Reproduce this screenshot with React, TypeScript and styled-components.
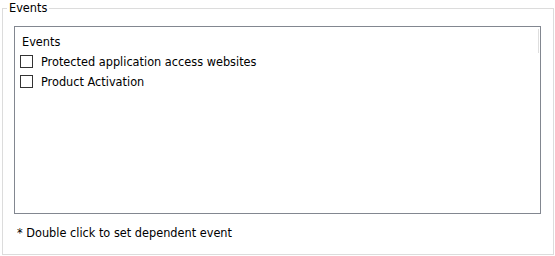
import React from 'react'
import styled, { createGlobalStyle } from 'styled-components'

const Global = createGlobalStyle`
  html, body { margin: 0; padding: 0; background: #fff; }
  body {
    font-family: "DejaVu Sans Condensed", "DejaVu Sans", sans-serif;
    font-size: 12.6px;
    color: #000;
  }
`

const Group = styled.fieldset`
  box-sizing: border-box;
  width: 552px;
  height: 255px;
  margin: 0 0 0 2px;
  padding: 10px 12px 0 11px;
  border: 1px solid #dcdcdc;
  border-radius: 0;
  min-width: 0;
`

const Legend = styled.legend`
  padding: 0 2px;
  margin-left: -7px;
  line-height: 16px;
`

const ListBox = styled.div`
  position: relative;
  box-sizing: border-box;
  width: 527px;
  height: 188px;
  border: 1px solid #828790;
  padding-top: 5px;
  background: #fff;
`

const ScrollMark = styled.div`
  position: absolute;
  top: 2px;
  right: 1px;
  width: 1px;
  height: 24px;
  background: #dedede;
`

const Header = styled.div`
  height: 19px;
  line-height: 19px;
  padding-left: 7px;
`

const Item = styled.label`
  display: flex;
  align-items: center;
  height: 20px;
  padding-left: 5px;
  gap: 8px;
  white-space: nowrap;
`

const Box = styled.span`
  box-sizing: border-box;
  width: 13px;
  height: 13px;
  border: 1px solid #333;
  background: #fff;
  flex: none;
`

const Note = styled.div`
  margin-top: 10px;
  padding-left: 3px;
  line-height: 17px;
`

const events = ['Protected application access websites', 'Product Activation']

export default function App() {
  return (
    <>
      <Global />
      <Group>
        <Legend>Events</Legend>
        <ListBox>
          <ScrollMark />
          <Header>Events</Header>
          {events.map(e => (
            <Item key={e}>
              <Box />
              {e}
            </Item>
          ))}
        </ListBox>
        <Note>* Double click to set dependent event</Note>
      </Group>
    </>
  )
}
